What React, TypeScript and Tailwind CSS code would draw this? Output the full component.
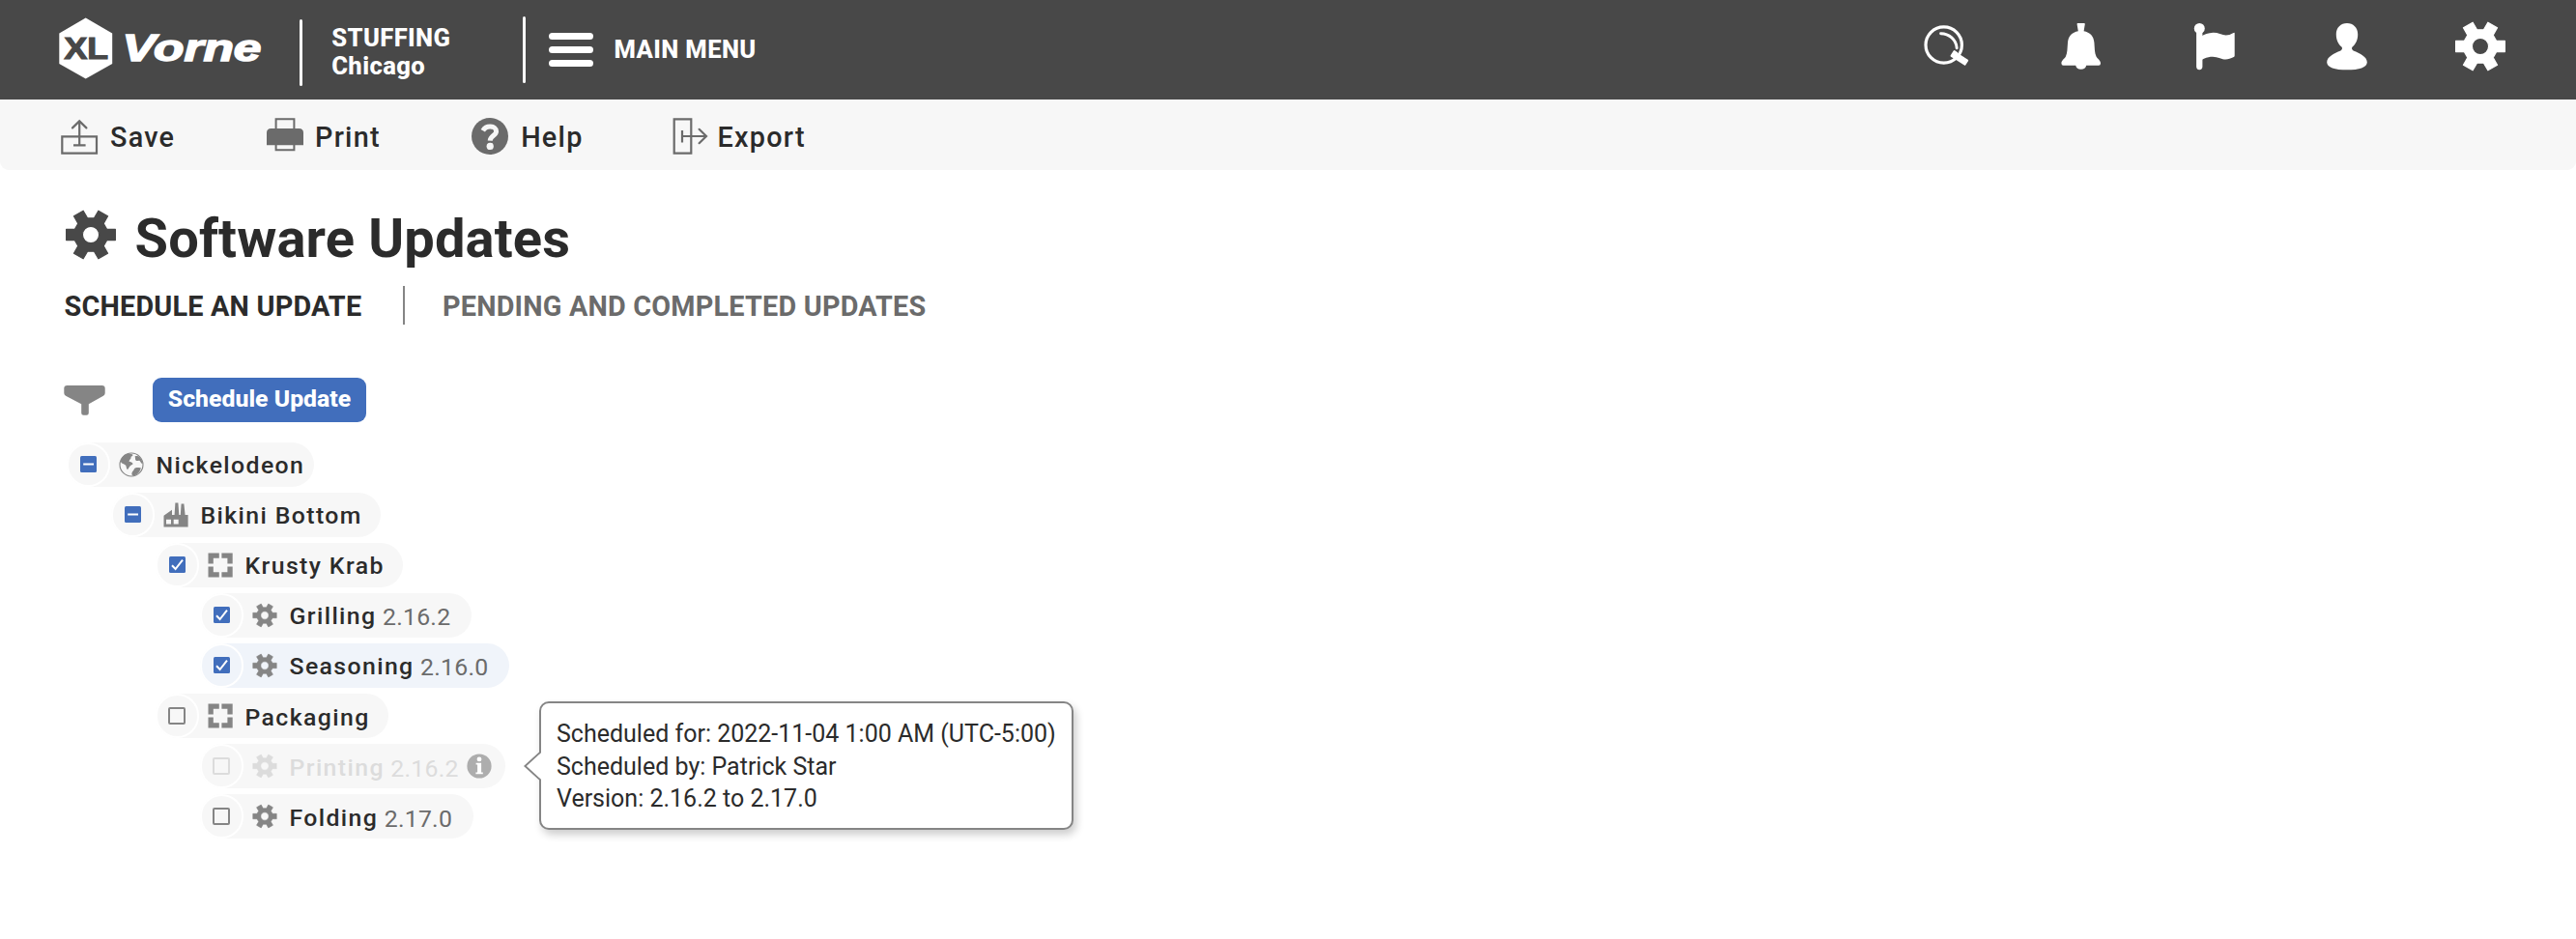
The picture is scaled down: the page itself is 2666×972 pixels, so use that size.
import React from "react";

type IconProps = { className?: string };

const rotate = (x: number, y: number, deg: number) => {
  const a = (deg * Math.PI) / 180;
  return `${(x * Math.cos(a) - y * Math.sin(a)).toFixed(2)} ${(x * Math.sin(a) + y * Math.cos(a)).toFixed(2)}`;
};

const gearOutline =
  "M" +
  [0, 60, 120, 180, 240, 300]
    .flatMap((d) => [rotate(16.6, -5.6, d), rotate(25.4, -5.6, d), rotate(25.4, 5.6, d), rotate(16.6, 5.6, d)])
    .join("L") +
  "Z";
const gearHole = "M8.6 0A8.6 8.6 0 1 0 -8.6 0A8.6 8.6 0 1 0 8.6 0Z";

function Gear({ className }: IconProps) {
  return (
    <svg viewBox="-27 -27 54 54" className={className} fill="currentColor">
      <path d={gearOutline + gearHole} fillRule="evenodd" stroke="currentColor" strokeWidth="1.2" strokeLinejoin="round" />
    </svg>
  );
}

function Search() {
  return (
    <svg viewBox="0 0 54 54" className="size-[54px]" fill="none" stroke="currentColor">
      <circle cx="23.7" cy="25.5" r="18.7" strokeWidth="3.2" />
      <path d="M20.6 13.7C29 13.6 36.6 20 37.2 28.8" strokeWidth="2.9" strokeLinecap="round" />
      <g transform="translate(33.6 34.6) rotate(33)" fill="currentColor" stroke="none">
        <rect x="-1.5" y="-3.6" width="5" height="7.6" rx="1" />
        <rect x="1.5" y="-3" width="15.5" height="6.8" rx="1" />
      </g>
    </svg>
  );
}

function Bell() {
  return (
    <svg viewBox="0 0 54 54" className="size-[54px]" fill="currentColor">
      <path d="M24.4 3H31Q31.9 3 31.8 4L30.6 11.2C37 12.3 40.9 16.5 41.4 23C41.9 29 41.7 34 43.5 37.5C44.9 40.2 48 41.5 48 44.4Q48 46.7 46 46.7H33.2A5.6 5 0 0 1 22.2 46.7H9.4Q7.4 46.7 7.4 44.4C7.4 41.5 10.5 40.2 11.9 37.5C13.7 34 13.5 29 14 23C14.5 16.5 18.4 12.3 24.8 11.2L23.6 4Q23.5 3 24.4 3Z" />
    </svg>
  );
}

function Flag() {
  return (
    <svg viewBox="0 0 54 54" className="size-[54px]" fill="currentColor">
      <circle cx="12.3" cy="8.4" r="5.5" />
      <rect x="9.1" y="8" width="6.3" height="43.2" rx="3.1" />
      <path d="M14.5 16.2C22 12.6 27.5 11.8 33.5 14.1C39 16.2 42.5 15.8 47.6 12.9Q48.7 12.4 48.7 13.4V36.6Q48.7 37.6 47.8 38.1C42.5 40.8 38.5 41.4 33.5 39.2C27.5 36.7 21.5 37.2 14.5 41Z" />
    </svg>
  );
}

function User() {
  return (
    <svg viewBox="0 0 54 54" className="size-[54px]" fill="currentColor">
      <path d="M27 3C33.4 3 38.2 7.6 38.2 14.4C38.2 20.5 35.9 24.4 32.6 27.6C31.5 28.8 31.9 30.6 33.6 31.4C40.5 34.3 47.8 37.6 47.8 43.4C47.8 48.6 39.5 51.3 27 51.3C14.5 51.3 6.2 48.6 6.2 43.4C6.2 37.6 13.5 34.3 20.4 31.4C22.1 30.6 22.5 28.8 21.4 27.6C18.1 24.4 15.8 20.5 15.8 14.4C15.8 7.6 20.6 3 27 3Z" />
    </svg>
  );
}

function Logo() {
  return (
    <svg viewBox="0 0 214 66" className="h-[66px] w-[214px]">
      <path d="M28.7 1.5L56.2 17.4V49L28.7 64.6L1.3 49V17.4Z" fill="#fff" />
      <text x="6.6" y="43.6" textLength="45.5" lengthAdjust="spacingAndGlyphs" fontSize="32" fontWeight="700" fill="#484848" stroke="#484848" strokeWidth="1.2" className="font-['Liberation_Sans',sans-serif]">
        XL
      </text>
      <text x="66.5" y="45.6" textLength="144" lengthAdjust="spacingAndGlyphs" fontSize="38" fontWeight="700" fontStyle="italic" fill="#fff" stroke="#fff" strokeWidth="1.5" className="font-['Liberation_Sans',sans-serif]">
        Vorne
      </text>
    </svg>
  );
}

function SaveIcon() {
  return (
    <svg viewBox="0 0 40 40" className="size-10" fill="none" stroke="#6b6b6b" strokeWidth="2.2">
      <path d="M2.3 20.3H38V37.7H2.3Z" />
      <path d="M20.2 29.3V4.8M14 29.3H26.6" />
      <path d="M13 11.4L20.2 4.4L27.4 11.4" strokeLinecap="round" />
    </svg>
  );
}

function PrintIcon() {
  return (
    <svg viewBox="0 0 40 40" className="size-10">
      <path d="M10.6 14V2.2H29.4V14M10.6 28V34.2H29.4V28" fill="none" stroke="#6b6b6b" strokeWidth="2" />
      <path d="M1 29.2V16.5Q1 12 5.5 12H34.5Q39 12 39 16.5V29.2Z" fill="#6b6b6b" />
    </svg>
  );
}

function HelpIcon() {
  return (
    <svg viewBox="0 0 40 40" className="size-10">
      <circle cx="20" cy="20" r="19" fill="#6b6b6b" />
      <path d="M12.8 14.2C14.4 11.4 17 10 20.2 10C24 10 26.6 12 26.6 15C26.6 19.2 20.6 19.4 20.2 24.6" fill="none" stroke="#f7f7f7" strokeWidth="5" />
      <circle cx="20.2" cy="30.4" r="3.6" fill="#f7f7f7" />
    </svg>
  );
}

function ExportIcon() {
  return (
    <svg viewBox="0 0 40 40" className="size-10" fill="none" stroke="#6b6b6b" strokeWidth="2.2">
      <path d="M2.7 2.3H20.3V37.7H2.7Z" />
      <path d="M11 14V26.5M11 20H36" />
      <path d="M28.6 12.8L36 20L28.6 27.2" strokeLinecap="round" />
    </svg>
  );
}

function Funnel() {
  return (
    <svg viewBox="0 0 44 32" className="h-8 w-11" fill="#858585">
      <path d="M3.5 1H39.5Q42.7 1 42.7 4V9Q42.7 10.8 41 11.8L25.8 20.3V29.5Q25.8 31.8 23.5 31.8H20.5Q18.2 31.8 18.2 29.5V20.3L2 11.8Q.3 10.8 .3 9V4Q.3 1 3.5 1Z" />
    </svg>
  );
}

function Globe() {
  return (
    <svg viewBox="0 0 26 26" className="size-[26px]" fill="#858585">
      <circle cx="13" cy="13" r="12" fill="none" stroke="#858585" strokeWidth="1.1" />
      <path d="M1.8 9.5C2.6 5.4 6 2.4 9.5 1.6L14 2.2C15.2 3 14.2 4.2 12.8 4.6C12.2 6 13 6.8 11.6 7.4L10.4 9.4C12 9.8 14.4 10.6 14.6 12.2C13.4 13.4 12 13.6 10.8 15.4L9 18.2C7.6 17.4 8 15.2 7.2 13.8C6 12.6 3.8 12 2.6 11Z" />
      <path d="M16.6 4.4C18.2 3.4 20.2 4 21.6 5.2C23.6 7.4 24.4 9.6 24.6 12C23 12 22.8 10 21.6 9C20.4 8.4 19.2 9.6 17.8 8.8C16.4 7.8 17.6 6.6 16.6 4.4Z" />
      <path d="M16 17.2C18 15.4 20.6 16.4 22.8 16.2C22.4 19.6 19.4 23.4 15.4 24.6C13.6 24.4 13 22.8 13.6 21.2C14 19.8 15.4 19 16 17.2Z" />
    </svg>
  );
}

function Factory() {
  return (
    <svg viewBox="0 0 26 26" className="size-[26px]" fill="#858585">
      <path
        fillRule="evenodd"
        d="M.5 25.5V13.8L9 7.8V13H11.6L12.4.6H15.4L16.3 13H17.8L18.6 1.6H21.4L22.6 13H25.6V25.5ZM3 17.7V22.5H8V17.7ZM10.7 17.7V22.5H15.7V17.7Z"
      />
    </svg>
  );
}

function Area() {
  return (
    <svg viewBox="0 0 26 26" className="size-[26px]" fill="#858585">
      <path d="M.5.5H11.8V5.8H5.8V11.5H.5ZM14.4.5H25.7V11.5H20.4V5.8H14.4ZM.5 14.4H5.8V20.3H11.8V25.5H.5ZM20.4 14.4H25.7V25.5H14.4V20.3H20.4Z" />
    </svg>
  );
}

function InfoIcon() {
  return (
    <svg viewBox="0 0 26 26" className="size-[26px]">
      <circle cx="13" cy="13" r="12.6" fill="#adadad" />
      <circle cx="13" cy="5.9" r="2.4" fill="#fff" />
      <path d="M9.6 9.8H15.1V19.6H16.8V21.2H9.4V19.6H11.1V11.4H9.6Z" fill="#fff" />
    </svg>
  );
}

function CheckBox({ state, disabled }: { state: "on" | "off" | "mixed"; disabled?: boolean }) {
  if (state === "off") {
    return <span className={`size-[18px] rounded-[2px] border-2 ${disabled ? "border-[#dcdcdc]" : "border-[#858585]"}`} />;
  }
  return (
    <svg viewBox="0 0 17 17" className="size-[17px]">
      <rect width="17" height="17" rx="1.5" fill="#416ebc" />
      {state === "on" ? (
        <path d="M3 9.2L6.6 13L14 3.6" fill="none" stroke="#fff" strokeWidth="2" />
      ) : (
        <rect x="3.2" y="7.5" width="10.8" height="2" fill="#fff" />
      )}
    </svg>
  );
}

type RowProps = {
  state: "on" | "off" | "mixed";
  icon: React.ReactNode;
  name: string;
  version?: string;
  box: string;
  active?: boolean;
  disabled?: boolean;
  children?: React.ReactNode;
};

function TreeRow({ state, icon, name, version, box, active, disabled, children }: RowProps) {
  return (
    <li className={`relative flex h-[46px] items-center rounded-full ${box} ${active ? "bg-[#f0f4fa]" : "bg-[#f7f7f7]"}`}>
      <span className="flex h-[46px] w-[45px] shrink-0 items-center justify-center rounded-full border-2 border-white">
        <CheckBox state={state} disabled={disabled} />
      </span>
      <span className={`ml-[9.5px] shrink-0 ${disabled ? "text-[#dcdcdc]" : "text-[#858585]"}`}>{icon}</span>
      <span className={`ml-[12.5px] mt-1 text-[24.8px] font-medium tracking-[1.4px] whitespace-nowrap ${disabled ? "text-[#dcdcdc]" : "text-[#2b2b2b]"}`}>{name}</span>
      {version && (
        <span className={`ml-[6.5px] mt-1.5 text-[24.8px] tracking-[0.25px] ${disabled ? "text-[#dcdcdc]" : "text-[#6b6b6b]"}`}>{version}</span>
      )}
      {children}
    </li>
  );
}

const rowGear = <Gear className="size-[26px]" />;

function Tooltip() {
  return (
    <div className="absolute top-[-44px] left-[351.5px] h-[133px] w-[553px] rounded-[10px] border-2 border-[#858585] bg-white pt-[15px] pl-4 text-[25px] leading-[33.5px] whitespace-nowrap text-[#2b2b2b] shadow-[3px_5px_9px_rgba(0,0,0,0.2)]">
      <svg viewBox="0 0 20 34" className="absolute top-[48px] left-[-19px] h-[34px] w-5">
        <path d="M19.5 2.6L2.8 17L19.5 31.4Z" fill="#fff" />
        <path d="M18.2 2.6L2.4 17L18.2 31.4" fill="none" stroke="#858585" strokeWidth="1.9" />
      </svg>
      <p>Scheduled for: 2022-11-04 1:00 AM (UTC-5:00)</p>
      <p>Scheduled by: Patrick Star</p>
      <p>Version: 2.16.2 to 2.17.0</p>
    </div>
  );
}

function Action({ icon, label, box }: { icon: React.ReactNode; label: string; box: string }) {
  return (
    <button className={`flex items-center ${box}`}>
      {icon}
      <span className="mt-[2px]">{label}</span>
    </button>
  );
}

export default function App() {
  return (
    <div className="min-h-[972px] bg-white font-['Roboto',sans-serif] leading-none">
      <header className="flex h-[103px] items-start bg-[#484848] pr-[72px] pl-[60px] text-white">
        <div className="mt-[17px] w-[250px]">
          <Logo />
        </div>
        <div className="mt-5 h-[69px] w-[2.7px] rounded-full bg-white" />
        <div className="mt-[25px] ml-[30.5px] w-[198px] text-[25.6px] leading-[29.3px] font-extrabold tracking-[0.4px]">
          <p>STUFFING</p>
          <p>Chicago</p>
        </div>
        <div className="mt-[16.5px] h-[69px] w-[2.7px] rounded-full bg-white" />
        <button className="mt-[34px] ml-[24.5px] flex h-[35px] items-center">
          <span className="flex w-[45.5px] flex-col gap-[7.8px]">
            <span className="h-[6.3px] rounded-full bg-white" />
            <span className="h-[6.3px] rounded-full bg-white" />
            <span className="h-[6.3px] rounded-full bg-white" />
          </span>
          <span className="ml-[21.5px] text-[25.6px] font-extrabold tracking-[0.4px]">MAIN MENU</span>
        </button>
        <nav className="mt-[21px] ml-auto flex gap-[84px]">
          <Search />
          <Bell />
          <Flag />
          <User />
          <Gear className="size-[54px]" />
        </nav>
      </header>

      <div className="flex h-[73px] items-center rounded-b-[9px] bg-[#f7f7f7] pt-[3px] pl-[62px] text-[28.8px] font-medium tracking-[1.25px] text-[#2b2b2b]">
        <Action icon={<SaveIcon />} label="Save" box="w-[213px] gap-[12px]" />
        <Action icon={<PrintIcon />} label="Print" box="w-[211.7px] gap-[11px]" />
        <Action icon={<HelpIcon />} label="Help" box="w-[208.3px] gap-[12.5px]" />
        <Action icon={<ExportIcon />} label="Export" box="gap-[7.5px]" />
      </div>

      <main className="pl-[67px]">
        <div className="flex pt-10">
          <Gear className="-ml-[0.5px] size-[54px] text-[#484848]" />
          <h1 className="ml-[19px] text-[56px] leading-[62px] font-bold tracking-[0.15px] text-[#2b2b2b]">Software Updates</h1>
        </div>

        <div className="mt-[18px] flex h-10 items-center text-[28.8px] font-bold tracking-[0.2px]">
          <span className="-ml-[0.5px] mt-[2px] w-[350px] text-[#2b2b2b]">SCHEDULE AN UPDATE</span>
          <span className="h-10 w-[2px] bg-[#858585]" />
          <span className="mt-[2px] ml-[39.5px] text-[#6b6b6b]">PENDING AND COMPLETED UPDATES</span>
        </div>

        <div className="mt-[55px] flex h-[46px] items-center">
          <div className="-ml-[0.7px]">
            <Funnel />
          </div>
          <button className="ml-[47.7px] flex h-[46px] w-[221px] items-center justify-center rounded-[9px] bg-[#416ebc] pb-[1px] text-[24.8px] font-extrabold text-white">
            Schedule Update
          </button>
        </div>

        <ul className="mt-[20.5px] flex flex-col gap-[6.1px] pl-[1.5px]">
          <TreeRow state="mixed" icon={<Globe />} name="Nickelodeon" box="w-[256px]" />
          <TreeRow state="mixed" icon={<Factory />} name="Bikini Bottom" box="ml-[46px] w-[279px]" />
          <TreeRow state="on" icon={<Area />} name="Krusty Krab" box="ml-[92px] w-[256px]" />
          <TreeRow state="on" icon={rowGear} name="Grilling" version="2.16.2" box="ml-[138px] w-[281px]" />
          <TreeRow state="on" icon={rowGear} name="Seasoning" version="2.16.0" box="ml-[138px] w-[320px]" active />
          <TreeRow state="off" icon={<Area />} name="Packaging" box="ml-[92px] w-[241px]" />
          <TreeRow state="off" icon={rowGear} name="Printing" version="2.16.2" box="ml-[138px] w-[316px]" disabled>
            <span className="ml-[8px]">
              <InfoIcon />
            </span>
            <Tooltip />
          </TreeRow>
          <TreeRow state="off" icon={rowGear} name="Folding" version="2.17.0" box="ml-[138px] w-[283px]" />
        </ul>
      </main>
    </div>
  );
}
